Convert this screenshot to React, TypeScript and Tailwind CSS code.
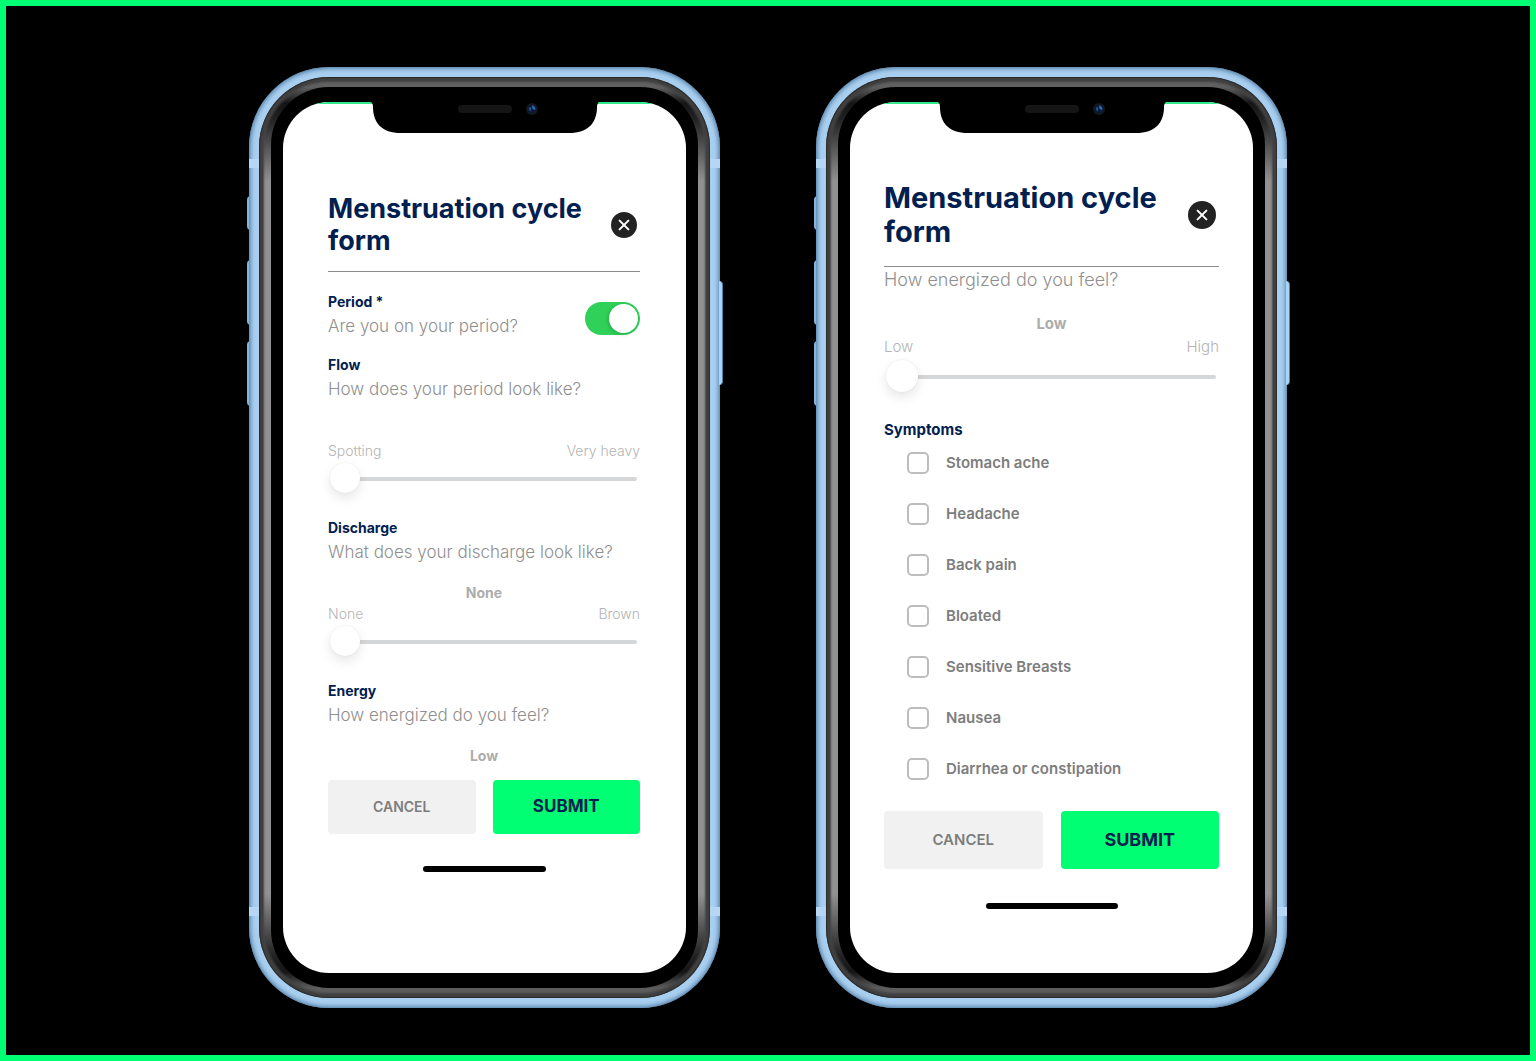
import { useId, useState, type ReactNode } from "react";

type Size = "base" | "large";

const symptoms = [
  "Stomach ache",
  "Headache",
  "Back pain",
  "Bloated",
  "Sensitive Breasts",
  "Nausea",
  "Diarrhea or constipation",
];

function Notch() {
  return (
    <svg
      className="absolute -top-px left-1/2 h-8 w-[236px] -translate-x-1/2"
      viewBox="0 0 236 32"
      aria-hidden="true"
    >
      <path
        d="M0 0C4 0 6 2 6 6C6 22 15 32 34 32H202C221 32 230 22 230 6C230 2 232 0 236 0Z"
        fill="#000"
      />
      <rect x="91" y="4" width="54" height="8" rx="4" fill="#151515" />
      <circle cx="165" cy="8" r="6" fill="#14171c" />
      <circle cx="165" cy="8" r="4" fill="#0b1a3c" />
      <path d="M165 4.6A3.4 3.4 0 0 1 168.2 9L165.6 8Z" fill="#2f6fae" />
      <path d="M162 6.4L164 6V10.4A3.4 3.4 0 0 1 162 6.4Z" fill="#234f8c" />
    </svg>
  );
}

function Phone({ children }: { children: ReactNode }) {
  return (
    <div className="relative flex w-full max-w-[471px]">
      <span className="absolute -left-[2px] top-[129px] h-[34px] w-1 rounded-l-sm bg-[#86b5dc]" />
      <span className="absolute -left-[2px] top-[193px] h-[65px] w-1 rounded-l-sm bg-[#86b5dc]" />
      <span className="absolute -left-[2px] top-[274px] h-[65px] w-1 rounded-l-sm bg-[#86b5dc]" />
      <div className="relative flex w-full rounded-[80px] bg-[#a9cff0] p-[10px] shadow-[inset_0_0_5px_1px_#3f6d94]">
        <span className="absolute left-0 top-[92px] h-[9px] w-[10px] bg-[#b5d6f4]" />
        <span className="absolute right-0 top-[92px] h-[9px] w-[10px] bg-[#b5d6f4]" />
        <span className="absolute bottom-[92px] left-0 h-[9px] w-[10px] bg-[#b5d6f4]" />
        <span className="absolute bottom-[92px] right-0 h-[9px] w-[10px] bg-[#b5d6f4]" />
        <div className="flex w-full rounded-[70px] bg-[#404040] p-1 shadow-[inset_0_0_1px_1px_#2b2b2b]">
          <div className="flex w-full rounded-[66px] bg-[linear-gradient(to_bottom,#606060_0,#606060_6px,#151515_22px,#222222_38px,#919191_100px,#919191_calc(100%-100px),#222222_calc(100%-38px),#151515_calc(100%-22px),#5c5c5c_calc(100%-6px),#5c5c5c_100%)] px-2 py-[6px] shadow-[inset_0_0_2px_1px_#444444]">
            <div className="flex w-full rounded-[58px] bg-black px-[12px] py-[15px]">
              <div className="relative w-full overflow-hidden rounded-[46px] bg-white">
                <div className="absolute inset-x-0 top-0 h-[2px] bg-[#2fe88a]" />
                <Notch />
                {children}
              </div>
            </div>
          </div>
        </div>
      </div>
      <span className="absolute -right-[3px] top-[214px] h-[104px] w-1 rounded-r-sm border-r border-[#4f7fa8] bg-[#a9d5f5]" />
    </div>
  );
}

function Header({ size }: { size: Size }) {
  const large = size === "large";
  return (
    <header
      className={
        large
          ? "flex items-center justify-between border-b border-[#8d8d8d] pb-[17px] pr-[3px]"
          : "flex items-center justify-between border-b border-[#8d8d8d] pb-[14px] pr-[3px]"
      }
    >
      <h1
        className={
          large
            ? "w-[290px] text-[29px] font-bold leading-[34px] text-[#02204f]"
            : "w-[270px] text-[27px] font-bold leading-8 text-[#02204f]"
        }
      >
        Menstruation cycle form
      </h1>
      <button
        type="button"
        aria-label="Close"
        className={
          large
            ? "grid size-7 place-items-center rounded-full bg-[#222222]"
            : "grid size-[26px] place-items-center rounded-full bg-[#222222]"
        }
      >
        <svg className="size-3" viewBox="0 0 12 12" fill="none" stroke="#fff" strokeWidth="2" strokeLinecap="round" aria-hidden="true">
          <path d="M1.6 1.6L10.4 10.4M10.4 1.6L1.6 10.4" />
        </svg>
      </button>
    </header>
  );
}

function Slider({
  size,
  label,
  value,
  min,
  max,
}: {
  size: Size;
  label: string;
  value?: string;
  min: string;
  max: string;
}) {
  const [position, setPosition] = useState(0);
  const large = size === "large";
  return (
    <div className={large ? "mt-5 text-[15px]" : "mt-[17px] text-sm"}>
      <p className={large ? "h-[22px] text-center font-bold leading-[22px] text-[#adadad]" : "h-5 text-center font-bold leading-5 text-[#adadad]"}>
        {value}
      </p>
      <div
        className={
          large
            ? "flex justify-between font-light leading-6 text-[#b4b4b4]"
            : "flex justify-between font-light leading-[22px] text-[#b4b4b4]"
        }
      >
        <span>{min}</span>
        <span>{max}</span>
      </div>
      <div className={large ? "flex h-9 items-center pl-[2px] pr-[3px]" : "flex h-[34px] items-center pl-[2px] pr-[3px]"}>
        <input
          type="range"
          aria-label={label}
          min={0}
          max={100}
          value={position}
          onChange={(e) => setPosition(Number(e.target.value))}
          className={
            large
              ? "h-8 w-full appearance-none bg-transparent [&::-webkit-slider-runnable-track]:h-1 [&::-webkit-slider-runnable-track]:rounded-full [&::-webkit-slider-runnable-track]:bg-[#d4d6d7] [&::-webkit-slider-thumb]:-mt-[15px] [&::-webkit-slider-thumb]:size-8 [&::-webkit-slider-thumb]:appearance-none [&::-webkit-slider-thumb]:rounded-full [&::-webkit-slider-thumb]:bg-white [&::-webkit-slider-thumb]:shadow-[0_5px_12px_rgba(0,0,0,0.1),0_0_2px_rgba(0,0,0,0.08)]"
              : "h-[30px] w-full appearance-none bg-transparent [&::-webkit-slider-runnable-track]:h-1 [&::-webkit-slider-runnable-track]:rounded-full [&::-webkit-slider-runnable-track]:bg-[#d4d6d7] [&::-webkit-slider-thumb]:-mt-[14px] [&::-webkit-slider-thumb]:size-[30px] [&::-webkit-slider-thumb]:appearance-none [&::-webkit-slider-thumb]:rounded-full [&::-webkit-slider-thumb]:bg-white [&::-webkit-slider-thumb]:shadow-[0_5px_12px_rgba(0,0,0,0.1),0_0_2px_rgba(0,0,0,0.08)]"
          }
        />
      </div>
    </div>
  );
}

function Question({ title, text }: { title: string; text: string }) {
  return (
    <div>
      <h2 className="text-sm font-bold leading-5 text-[#02204f]">{title}</h2>
      <p className="text-[17px] font-light leading-7 text-[#8f8f8f]">{text}</p>
    </div>
  );
}

function Toggle() {
  const [on, setOn] = useState(true);
  return (
    <button
      type="button"
      role="switch"
      aria-checked={on}
      aria-label="Are you on your period?"
      onClick={() => setOn(!on)}
      className={
        on
          ? "mt-[10px] flex h-[33px] w-[55px] justify-end rounded-full bg-[#30d158] p-[2px]"
          : "mt-[10px] flex h-[33px] w-[55px] justify-start rounded-full bg-[#d4d6d7] p-[2px]"
      }
    >
      <span className="size-[29px] rounded-full bg-white shadow-[-1px_1px_4px_rgba(0,0,0,0.2)]" />
    </button>
  );
}

function Actions({ size }: { size: Size }) {
  const large = size === "large";
  return (
    <>
      <div className={large ? "mt-[31px] grid grid-cols-2 gap-[18px]" : "mt-[14px] grid grid-cols-2 gap-[17px]"}>
        <button
          type="button"
          className={
            large
              ? "h-[58px] rounded-sm bg-[#f1f1f1] text-[15px] font-semibold text-[#7d7d7d]"
              : "h-[54px] rounded-sm bg-[#f1f1f1] text-sm font-semibold text-[#7d7d7d]"
          }
        >
          CANCEL
        </button>
        <button
          type="submit"
          className={
            large
              ? "h-[58px] rounded-sm bg-[#00ff73] text-lg font-bold text-[#02204f]"
              : "h-[54px] rounded-sm bg-[#00ff73] text-[17px] font-bold text-[#02204f]"
          }
        >
          SUBMIT
        </button>
      </div>
      <div
        className={
          large
            ? "mx-auto mt-[34px] h-[6px] w-[132px] rounded-full bg-black"
            : "mx-auto mt-8 h-[6px] w-[123px] rounded-full bg-black"
        }
      />
    </>
  );
}

function Symptom({ name }: { name: string }) {
  const id = useId();
  return (
    <li className="flex h-[22px] items-center gap-[17px]">
      <input
        id={id}
        type="checkbox"
        className="size-[22px] shrink-0 appearance-none rounded-[5px] border-2 border-[#bdbdbd] bg-white checked:bg-[#00ff73]"
      />
      <label htmlFor={id} className="text-[15px] font-semibold leading-6 text-[#7d7d7d]">
        {name}
      </label>
    </li>
  );
}

export default function App() {
  return (
    <main className="flex min-h-screen flex-col justify-center border-[6px] border-[#00ff73] bg-black px-6 pt-[14px] font-['Inter',sans-serif]">
      <div className="flex justify-center gap-24">
        <Phone>
          <form className="pb-16 pl-[45px] pr-[46px] pt-[91px]" onSubmit={(e) => e.preventDefault()}>
            <Header size="base" />
            <div className="mt-5 flex justify-between">
              <Question title="Period *" text="Are you on your period?" />
              <Toggle />
            </div>
            <div className="mt-[15px] flex flex-col gap-[22px]">
              <section>
                <Question title="Flow" text="How does your period look like?" />
                <Slider size="base" label="Flow" min="Spotting" max="Very heavy" />
              </section>
              <section>
                <Question title="Discharge" text="What does your discharge look like?" />
                <Slider size="base" label="Discharge" value="None" min="None" max="Brown" />
              </section>
              <section>
                <Question title="Energy" text="How energized do you feel?" />
                <p className="mt-[17px] text-center text-sm font-bold leading-5 text-[#adadad]">Low</p>
              </section>
            </div>
            <Actions size="base" />
          </form>
        </Phone>
        <Phone>
          <form className="px-[34px] pb-16 pt-[79px]" onSubmit={(e) => e.preventDefault()}>
            <Header size="large" />
            <p className="text-lg font-light leading-[26px] text-[#8f8f8f]">How energized do you feel?</p>
            <Slider size="large" label="Energy" value="Low" min="Low" max="High" />
            <h2 className="mt-6 text-[15px] font-bold leading-[22px] text-[#02204f]">Symptoms</h2>
            <ul className="mt-[11px] flex flex-col gap-[29px] pl-[23px]">
              {symptoms.map((name) => (
                <Symptom key={name} name={name} />
              ))}
            </ul>
            <Actions size="large" />
          </form>
        </Phone>
      </div>
    </main>
  );
}
